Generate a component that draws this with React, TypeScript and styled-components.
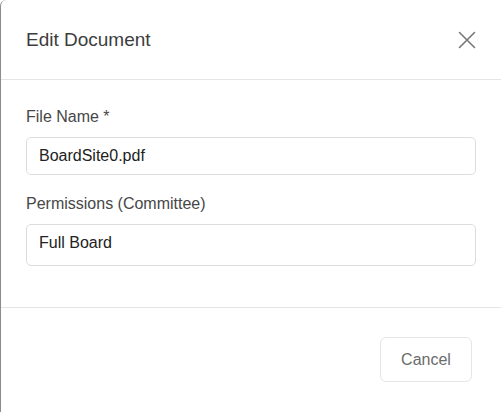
import React from "react";
import styled, { createGlobalStyle } from "styled-components";

const Global = createGlobalStyle`
  html, body { margin: 0; padding: 0; background: #ffffff; }
  body { font-family: "Liberation Sans", Arial, Helvetica, sans-serif; }
  * { box-sizing: border-box; }
`;

const Modal = styled.div`
  width: 501px;
  height: 412px;
  background: #ffffff;
  border-left: 1px solid #8c8c8c;
  border-top-left-radius: 6px;
  overflow: hidden;
  display: flex;
  flex-direction: column;
`;

const Header = styled.header`
  height: 80px;
  flex: 0 0 auto;
  padding: 0 25px 0 25px;
  border-bottom: 1px solid #e4e4e4;
  display: flex;
  align-items: center;
  justify-content: space-between;
`;

const Title = styled.h2`
  margin: 0;
  font-size: 19px;
  font-weight: 400;
  color: #3d3d3d;
  line-height: 1;
`;

const CloseButton = styled.button`
  border: 0;
  background: transparent;
  padding: 0;
  width: 18px;
  height: 18px;
  display: flex;
  align-items: center;
  justify-content: center;
  cursor: pointer;
`;

const Body = styled.div`
  padding: 25px 25px 41px 25px;
  border-bottom: 1px solid #e4e4e4;
  display: flex;
  flex-direction: column;
`;

const Field = styled.div<{ $gap?: number }>`
  display: flex;
  flex-direction: column;
  margin-top: ${(p) => p.$gap ?? 0}px;
`;

const Label = styled.label`
  font-size: 16px;
  line-height: 24px;
  color: #474747;
  margin-bottom: 8px;
`;

const Input = styled.div<{ $h: number; $pt: number }>`
  height: ${(p) => p.$h}px;
  border: 1px solid #dcdcdc;
  border-radius: 5px;
  padding: ${(p) => p.$pt}px 12px 0 12px;
  font-size: 16px;
  line-height: 20px;
  color: #222222;
`;

const Footer = styled.footer`
  padding: 29px 29px 0 0;
  display: flex;
  justify-content: flex-end;
`;

const Button = styled.button`
  width: 92px;
  height: 45px;
  border: 1px solid #e6e6e6;
  border-radius: 6px;
  background: #ffffff;
  font-family: inherit;
  font-size: 16px;
  color: #6b6b6b;
  cursor: pointer;
`;

export default function App() {
  return (
    <>
      <Global />
      <Modal>
        <Header>
          <Title>Edit Document</Title>
          <CloseButton aria-label="Close">
            <svg width="18" height="18" viewBox="0 0 18 18">
              <path
                d="M1.5 1.5 L16.5 16.5 M16.5 1.5 L1.5 16.5"
                stroke="#777"
                strokeWidth="1.6"
                strokeLinecap="round"
                fill="none"
              />
            </svg>
          </CloseButton>
        </Header>
        <Body>
          <Field>
            <Label>File Name *</Label>
            <Input $h={38} $pt={8}>BoardSite0.pdf</Input>
          </Field>
          <Field $gap={17}>
            <Label>Permissions (Committee)</Label>
            <Input $h={42} $pt={8}>Full Board</Input>
          </Field>
        </Body>
        <Footer>
          <Button>Cancel</Button>
        </Footer>
      </Modal>
    </>
  );
}
